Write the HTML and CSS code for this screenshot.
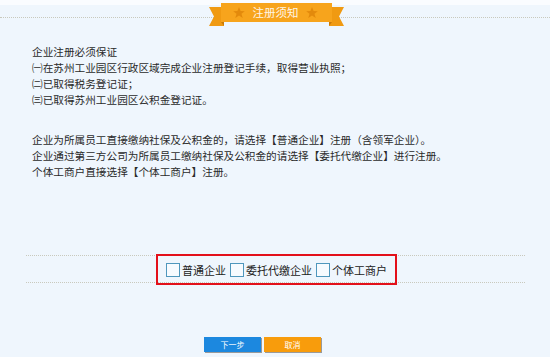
FILE: index.html
```html
<!DOCTYPE html>
<html lang="zh-CN">
<head>
<meta charset="utf-8">
<title>注册须知</title>
<link rel="stylesheet" href="styles.css">
</head>
<body>
<div class="page">
  <div class="topbar"></div>
  <div class="header"></div>
  <svg class="ribbon" width="135" height="27" viewBox="0 0 135 27">
    <polygon points="0,7 15,7 15,26 0,26 5,16.5" fill="#f09a12"/>
    <polygon points="135,7 120,7 120,26 135,26 130,16.5" fill="#f09a12"/>
    <polygon points="12,22 15,22 15,26" fill="#c97a08"/>
    <polygon points="123,22 120,22 120,26" fill="#c97a08"/>
    <rect x="12" y="3" width="111" height="19" fill="#f7a41c"/>
    <polygon points="30,7 31.6,11 35.8,11.2 32.5,13.8 33.7,18 30,15.6 26.3,18 27.5,13.8 24.2,11.2 28.4,11" fill="#e38a0c"/>
    <polygon points="103,7 104.6,11 108.8,11.2 105.5,13.8 106.7,18 103,15.6 99.3,18 100.5,13.8 97.2,11.2 101.4,11" fill="#e38a0c"/>
    <text x="66.5" y="17" text-anchor="middle" class="ribbon-text">注册须知</text>
  </svg>

  <div class="content">
    <div class="para">
      <div>企业注册必须保证</div>
      <div>㈠在苏州工业园区行政区域完成企业注册登记手续，取得营业执照；</div>
      <div>㈡已取得税务登记证；</div>
      <div>㈢已取得苏州工业园区公积金登记证。</div>
    </div>
    <div class="para para2">
      <div>企业为所属员工直接缴纳社保及公积金的，请选择【普通企业】注册（含领军企业）。</div>
      <div>企业通过第三方公司为所属员工缴纳社保及公积金的请选择【委托代缴企业】进行注册。</div>
      <div>个体工商户直接选择【个体工商户】注册。</div>
    </div>
  </div>

  <div class="options">
    <div class="choice-box">
      <label class="choice"><span class="check"></span><span class="label">普通企业</span></label>
      <label class="choice"><span class="check"></span><span class="label">委托代缴企业</span></label>
      <label class="choice"><span class="check"></span><span class="label">个体工商户</span></label>
    </div>
  </div>

  <div class="buttons">
    <span class="btn btn-next">下一步</span>
    <span class="btn btn-cancel">取消</span>
  </div>
</div>
</body>
</html>
```
FILE: styles.css
```css
html, body {
  margin: 0;
  padding: 0;
}
body {
  background: #eff6fd;
  font-family: "Noto Sans CJK SC", "Noto Sans", sans-serif;
  color: #2a2a2a;
  width: 550px;
  height: 357px;
  overflow: hidden;
}
.page {
  position: relative;
  width: 550px;
  height: 357px;
}
.topbar {
  height: 5px;
  background: #fafcff;
}
.header {
  height: 12px;
  border-bottom: 1px dotted #c9c9bd;
}
.ribbon {
  position: absolute;
  left: 209px;
  top: 0;
}
.ribbon-text {
  fill: #fff6e6;
  font-family: "Noto Sans CJK SC", sans-serif;
  font-size: 11.5px;
}
.content {
  padding-left: 32px;
  margin-top: 26px;
  font-size: 10.65px;
  line-height: 16px;
}
.para2 {
  margin-top: 24px;
}
.options {
  margin: 75px 25px 0 26px;
  height: 26px;
  border-top: 1px dotted #c9c9bd;
  border-bottom: 1px dotted #c9c9bd;
  display: flex;
  justify-content: center;
  align-items: center;
}
.choice-box {
  box-sizing: border-box;
  width: 241px;
  height: 31px;
  margin-left: 2px;
  border: 2px solid #e3101a;
  display: flex;
  align-items: center;
  justify-content: center;
  gap: 4px;
  padding-top: 1px;
}
.choice {
  display: flex;
  align-items: center;
  gap: 2px;
}
.check {
  box-sizing: border-box;
  width: 14px;
  height: 14px;
  border: 1.5px solid #4f97bd;
  background: #f7fbff;
}
.label {
  font-size: 11px;
  line-height: 14px;
  color: #222;
}
.buttons {
  margin-top: 54px;
  padding-left: 204px;
  display: flex;
  gap: 3px;
}
.btn {
  width: 57px;
  height: 15px;
  display: flex;
  align-items: center;
  justify-content: center;
  font-size: 8px;
  color: #fff;
  box-shadow: 1px 1px 0 #9a9a9a;
}
.btn-next {
  background: #1c88df;
}
.btn-cancel {
  background: #f89c0c;
}
```
